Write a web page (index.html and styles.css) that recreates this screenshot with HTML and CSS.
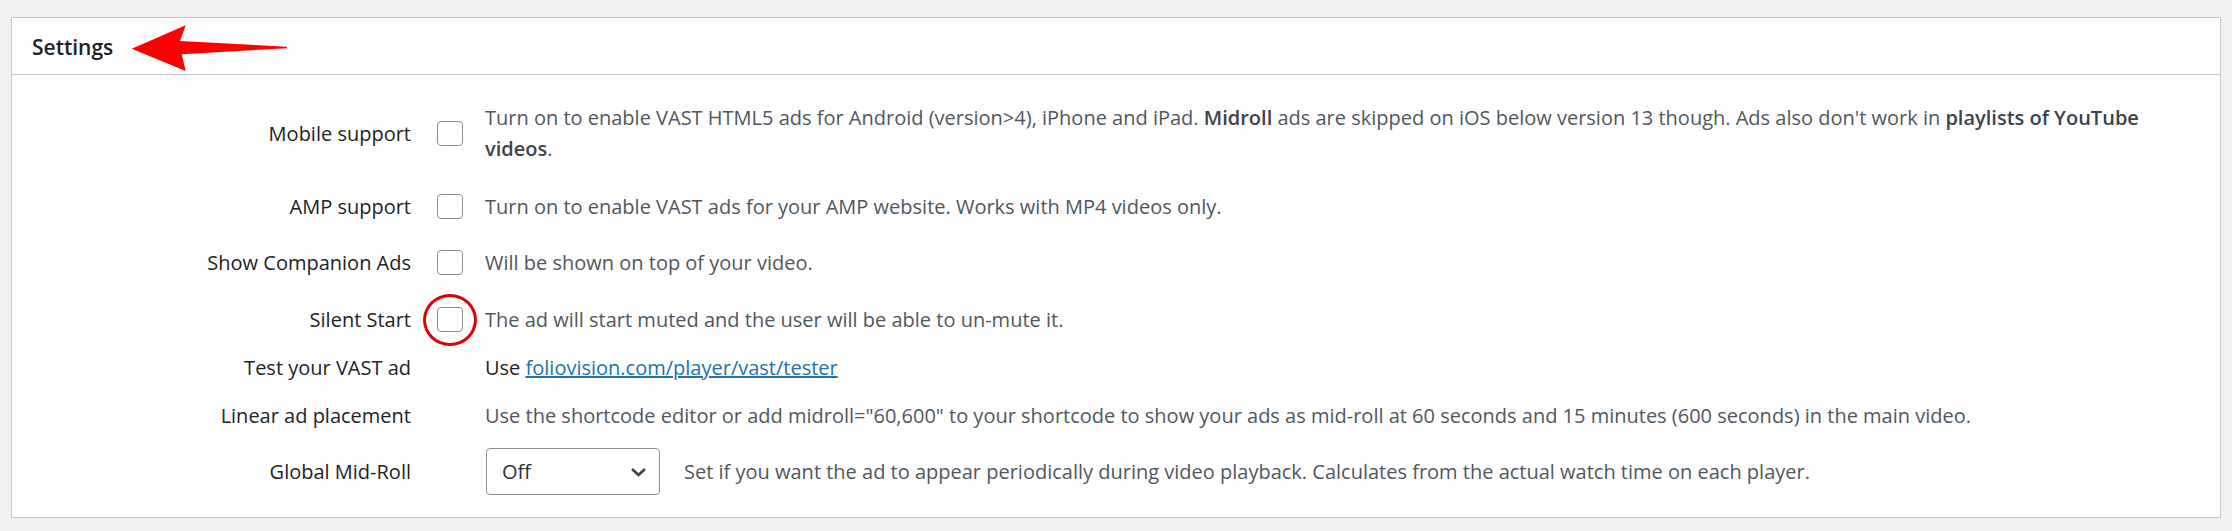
FILE: index.html
```html
<!DOCTYPE html>
<html lang="en">
<head>
<meta charset="UTF-8">
<title>Settings</title>
<link rel="stylesheet" href="styles.css">
</head>
<body>

<div class="postbox">
  <div class="postbox-header">
    <h2 class="hndle">Settings</h2>
    <svg class="callout-arrow" width="160" height="52" viewBox="0 0 160 52">
      <polygon points="1.7,26.7 55.7,3.3 50,19 157,24.7 157,26.2 51.7,32.3 55.7,49" fill="#ff0000"/>
    </svg>
  </div>

  <div class="inside">
    <div class="form-grid">

      <label class="cell-label">Mobile support</label>
      <div class="cell-check"><input type="checkbox" class="cb"></div>
      <p class="cell-desc">Turn on to enable VAST HTML5 ads for Android (version&gt;4), iPhone and iPad. <b>Midroll</b> ads are skipped on iOS below version 13 though. Ads also don't work in <b>playlists of YouTube</b> <b>videos</b>.</p>

      <label class="cell-label">AMP support</label>
      <div class="cell-check"><input type="checkbox" class="cb"></div>
      <p class="cell-desc">Turn on to enable VAST ads for your AMP website. Works with MP4 videos only.</p>

      <label class="cell-label">Show Companion Ads</label>
      <div class="cell-check"><input type="checkbox" class="cb"></div>
      <p class="cell-desc">Will be shown on top of your video.</p>

      <label class="cell-label">Silent Start</label>
      <div class="cell-check"><span class="marked"><input type="checkbox" class="cb"></span></div>
      <p class="cell-desc">The ad will start muted and the user will be able to un-mute it.</p>

      <label class="cell-label">Test your VAST ad</label>
      <div class="cell-check"></div>
      <p class="cell-desc dark">Use <a href="#">foliovision.com/player/vast/tester</a></p>

      <label class="cell-label">Linear ad placement</label>
      <div class="cell-check"></div>
      <p class="cell-desc">Use the shortcode editor or add midroll="60,600" to your shortcode to show your ads as mid-roll at 60 seconds and 15 minutes (600 seconds) in the main video.</p>

      <label class="cell-label">Global Mid-Roll</label>
      <div class="cell-check"></div>
      <div class="cell-desc inline">
        <div class="select">
          <span>Off</span>
          <svg width="17" height="10" viewBox="0 0 17 10"><polyline points="2,2 8.5,8 15,2" fill="none" stroke="#3c434a" stroke-width="2.6"/></svg>
        </div>
        <span>Set if you want the ad to appear periodically during video playback. Calculates from the actual watch time on each player.</span>
      </div>

    </div>
  </div>
</div>

</body>
</html>
```

FILE: styles.css
```css
html, body{
  margin:0;
  padding:0;
  background:#f0f0f1;
  color:#1d2327;
  font-family:"Open Sans", "Noto Sans", sans-serif;
  font-size:20px;
}

body{
  padding:17px 11px 13px 11px;
}

.postbox{
  background:#fff;
  border:1px solid #c3c4c7;
}

.postbox-header{
  position:relative;
  height:56px;
  display:flex;
  align-items:center;
  border-bottom:1px solid #c3c4c7;
}

.hndle{
  margin:0;
  padding:2px 20px 0 20px;
  font-size:21px;
  font-weight:600;
  color:#1d2327;
}

/* annotation arrow pointing at the title */
.callout-arrow{
  position:absolute;
  left:118px;
  top:4px;
}

.inside{
  padding:8px 0 14px 0;
}

.form-grid{
  display:grid;
  grid-template-columns:399px 74px 1fr;
  grid-template-rows:100px 47px 65px 49px 47px 49px 63px;
  align-items:center;
}

.cell-label{
  text-align:right;
  line-height:31px;
  color:#1d2327;
}

.cell-check{
  padding-left:26px;
  display:flex;
  align-items:center;
}

.cb{
  appearance:none;
  -webkit-appearance:none;
  margin:0;
  width:26px;
  height:25px;
  border:1px solid #8c8f94;
  border-radius:4px;
  background:#fff;
  display:block;
}

.marked{
  position:relative;
  display:block;
}

/* red ring drawn over the checkbox */
.marked::after{
  content:"";
  position:absolute;
  left:-14px;
  top:-13px;
  width:48px;
  height:46px;
  border:3px solid #e00000;
  border-radius:50%;
}

.cell-desc{
  margin:0;
  padding-right:40px;
  line-height:31px;
  color:#50575e;
}

.cell-desc b{
  font-weight:600;
  color:#3c434a;
}

.cell-desc.dark{
  color:#1d2327;
}

.cell-desc a{
  color:#2271b1;
}

.inline{
  display:flex;
  align-items:center;
  gap:24px;
}

.select{
  box-sizing:border-box;
  width:174px;
  height:47px;
  margin-left:1px;
  display:flex;
  align-items:center;
  justify-content:space-between;
  padding:0 12px 0 15px;
  border:1px solid #8c8f94;
  border-radius:4px;
  color:#2c3338;
}
```
